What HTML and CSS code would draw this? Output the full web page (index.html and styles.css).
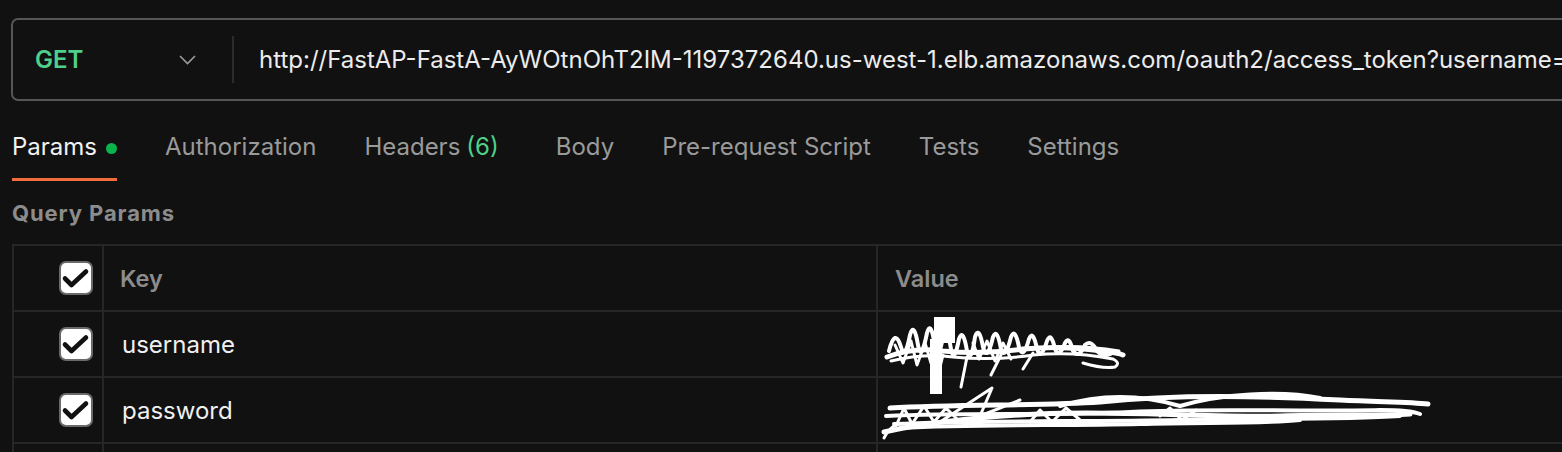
FILE: index.html
```html
<!DOCTYPE html>
<html>
<head>
<meta charset="utf-8">
<link rel="stylesheet" href="styles.css">
</head>
<body>
<div class="page">
  <div class="urlbar">
    <div class="method">
      <span class="method-name">GET</span>
      <svg class="chev" width="17" height="10" viewBox="0 0 17 10"><path d="M1 1 L8.5 8.5 L16 1" fill="none" stroke="#9a9a9a" stroke-width="1.6"/></svg>
    </div>
    <div class="divider"></div>
    <div class="url">http://FastAP-FastA-AyWOtnOhT2IM-1197372640.us-west-1.elb.amazonaws.com/oauth2/access_token?username=</div>
  </div>

  <div class="tabs">
    <div class="tab active">Params <span class="dot"></span></div>
    <div class="tab">Authorization</div>
    <div class="tab headers">Headers <span class="count">(6)</span></div>
    <div class="tab">Body</div>
    <div class="tab">Pre-request Script</div>
    <div class="tab">Tests</div>
    <div class="tab">Settings</div>
  </div>

  <div class="section-title">Query Params</div>

  <div class="table">
    <div class="row head">
      <div class="cell check"><span class="cb"><svg width="34" height="34" viewBox="0 0 34 34"><path d="M6 17.5 L12.5 24 L27 10.5" fill="none" stroke="#111" stroke-width="4.6" stroke-linecap="round" stroke-linejoin="round"/></svg></span></div>
      <div class="cell key hd">Key</div>
      <div class="cell val hd">Value</div>
    </div>
    <div class="row">
      <div class="cell check"><span class="cb"><svg width="34" height="34" viewBox="0 0 34 34"><path d="M6 17.5 L12.5 24 L27 10.5" fill="none" stroke="#111" stroke-width="4.6" stroke-linecap="round" stroke-linejoin="round"/></svg></span></div>
      <div class="cell key">username</div>
      <div class="cell val">
        <svg class="scribble s1" width="260" height="90" viewBox="0 0 260 90">
          <g fill="none" stroke="#fff" stroke-linecap="round" stroke-linejoin="round">
            <path stroke-width="4" d="M6 34 Q12 10 18 30 Q22 44 27 18 Q31 4 35 28 Q38 46 44 16 Q48 2 52 30 Q55 46 60 20 Q64 8 68 32 Q71 48 76 22 Q80 10 84 34 Q88 48 92 20 Q96 8 100 30 Q104 46 110 20 Q114 10 118 32 Q122 44 128 20 Q132 10 136 30 Q140 44 146 22 Q150 12 154 32 Q158 44 164 24 Q168 14 172 32 Q176 42 182 26 Q186 18 190 34 Q196 42 202 28 Q208 22 214 34 Q222 42 232 34"/>
            <path stroke-width="5" d="M4 40 Q30 30 60 34 Q100 38 140 32 Q180 28 220 34 Q236 36 240 38"/>
            <path stroke-width="3" d="M8 44 Q40 36 70 40 Q110 44 150 38 Q190 34 230 42 Q238 46 232 50 Q220 52 200 46"/>
            <path stroke-width="3" d="M12 28 L20 46 L28 24 L34 48 L42 26 L48 46 L56 30"/>
            <path stroke-width="3" d="M90 26 L96 42 L104 24 L112 44 L120 26 L128 42"/>
            <path stroke-width="3" d="M60 38 L54 62"/>
            <path stroke-width="3" d="M84 40 L78 70"/>
            <path stroke-width="3" d="M118 38 L108 58"/>
            <path stroke-width="3" d="M150 36 L140 52"/>
            <path stroke-width="3" d="M170 30 Q200 28 236 34"/>
          </g>
          <rect x="51" y="0" width="21" height="26" fill="#fff"/>
          <rect x="47" y="22" width="12" height="55" fill="#fff"/>
        </svg>
      </div>
    </div>
    <div class="row">
      <div class="cell check"><span class="cb"><svg width="34" height="34" viewBox="0 0 34 34"><path d="M6 17.5 L12.5 24 L27 10.5" fill="none" stroke="#111" stroke-width="4.6" stroke-linecap="round" stroke-linejoin="round"/></svg></span></div>
      <div class="cell key">password</div>
      <div class="cell val">
        <svg class="scribble s2" width="560" height="60" viewBox="0 0 560 60">
          <g fill="none" stroke="#fff" stroke-linecap="round" stroke-linejoin="round">
            <path stroke-width="5" d="M10 22 C80 18, 160 20, 220 16 C300 8, 380 10, 460 14 C500 16, 530 16, 548 18"/>
            <path stroke-width="4" d="M6 30 C90 26, 170 30, 250 26 C330 22, 420 26, 500 24 C520 24, 535 26, 540 28"/>
            <path stroke-width="5" d="M4 46 C60 34, 110 30, 160 28 C240 24, 320 32, 400 30 C450 28, 500 30, 530 28"/>
            <path stroke-width="4" d="M20 42 C100 38, 180 40, 260 38 C320 36, 380 38, 420 34"/>
            <path stroke-width="4" d="M14 38 C100 34, 200 36, 300 34 C380 32, 460 34, 520 30"/>
            <path stroke-width="3" d="M60 36 L112 2 L100 30 L140 14"/>
            <path stroke-width="4" d="M180 20 C220 8, 260 8, 300 20 C340 8, 400 4, 440 12"/>
            <path stroke-width="3" d="M16 40 L24 22 L32 38 L44 20 L54 36 L66 22 L78 34"/>
            <path stroke-width="3" d="M150 36 L160 24 L172 36 L186 22 L200 34"/>
            <path stroke-width="3" d="M280 30 L290 22 L302 34 L316 24"/>
            <path stroke-width="3" d="M4 52 Q8 44 14 40"/>
          </g>
        </svg>
      </div>
    </div>
    <div class="row last">
      <div class="cell check"></div>
      <div class="cell key"></div>
      <div class="cell val"></div>
    </div>
  </div>
</div>
</body>
</html>
```

FILE: styles.css
```css
html, body {
  margin: 0;
  padding: 0;
  background: #111111;
}
body {
  font-family: Inter, "Liberation Sans", sans-serif;
  color: #e6e6e6;
  overflow: hidden;
  width: 1562px;
  height: 452px;
}
.page {
  padding-top: 18px;
  width: 1562px;
}

/* URL bar */
.urlbar {
  margin-left: 11px;
  width: 1620px;
  height: 79px;
  border: 2px solid #565656;
  border-radius: 7px;
  display: flex;
  align-items: center;
  box-sizing: content-box;
}
.method {
  width: 219px;
  padding-left: 22px;
  padding-right: 36px;
  display: flex;
  align-items: center;
  justify-content: space-between;
  box-sizing: border-box;
}
.method-name {
  color: #4fd08a;
  font-size: 24px;
  font-weight: 600;
}
.chev {
  display: block;
}
.divider {
  width: 2px;
  height: 47px;
  background: #2c2c2c;
}
.url {
  margin-left: 25px;
  font-size: 24px;
  color: #ececec;
  white-space: nowrap;
}

/* Tabs */
.tabs {
  display: flex;
  gap: 48px;
  margin-left: 12px;
  margin-top: 32px;
}
.tab {
  font-size: 24px;
  color: #9a9a9a;
  height: 45px;
  display: flex;
  align-items: flex-start;
  line-height: 28px;
  box-sizing: border-box;
  white-space: nowrap;
}
.tab.active {
  color: #f2f2f2;
  border-bottom: 3px solid #f26b3a;
  height: 48px;
}
.dot {
  display: inline-block;
  width: 11px;
  height: 11px;
  border-radius: 50%;
  background: #0cb24c;
  margin-left: 9px;
  margin-top: 10px;
}
.headers {
  padding-right: 9px;
}
.count {
  color: #4fd08a;
  margin-left: 6px;
}

.section-title {
  margin-left: 12px;
  margin-top: 18px;
  font-size: 22px;
  font-weight: 700;
  letter-spacing: 0.9px;
  color: #8c8c8c;
  line-height: 28px;
}

/* Table */
.table {
  margin-left: 12px;
  margin-top: 17px;
  width: 1600px;
  border-top: 2px solid #262626;
  border-left: 2px solid #262626;
}
.row {
  display: flex;
  height: 66px;
  border-bottom: 2px solid #262626;
  box-sizing: border-box;
}
.cell {
  display: flex;
  align-items: center;
  box-sizing: border-box;
  position: relative;
}
.check {
  width: 90px;
  border-right: 2px solid #262626;
  justify-content: flex-end;
  padding-right: 9px;
}
.key {
  width: 774px;
  border-right: 2px solid #262626;
  padding-left: 18px;
  font-size: 24px;
  color: #f0f0f0;
}
.val {
  flex: 1;
  padding-left: 17px;
  font-size: 24px;
}
.hd {
  font-weight: 600;
  color: #8c8c8c;
  font-size: 23.5px;
}
.key.hd {
  padding-left: 16px;
}
.cb {
  width: 34px;
  height: 34px;
  box-sizing: border-box;
  background: #ffffff;
  border: 2px solid #6a6a6a;
  border-radius: 7px;
  display: flex;
  align-items: center;
  justify-content: center;
  overflow: hidden;
}
.cb svg {
  display: block;
  flex: none;
}
.scribble {
  position: absolute;
  overflow: visible;
}
.s1 {
  left: 5px;
  top: 5px;
}
.s2 {
  left: 2px;
  top: 8px;
}
.last {
  height: 20px;
  border-bottom: none;
}
```
